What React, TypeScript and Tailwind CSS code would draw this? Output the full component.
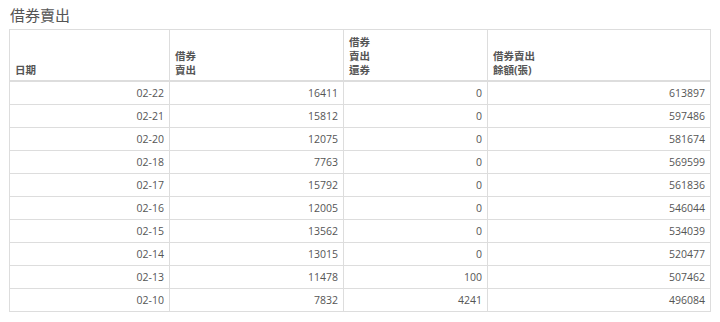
export default function App() {
  const rows = [
    { date: "02-22", sell: 16411, ret: 0, bal: 613897 },
    { date: "02-21", sell: 15812, ret: 0, bal: 597486 },
    { date: "02-20", sell: 12075, ret: 0, bal: 581674 },
    { date: "02-18", sell: 7763, ret: 0, bal: 569599 },
    { date: "02-17", sell: 15792, ret: 0, bal: 561836 },
    { date: "02-16", sell: 12005, ret: 0, bal: 546044 },
    { date: "02-15", sell: 13562, ret: 0, bal: 534039 },
    { date: "02-14", sell: 13015, ret: 0, bal: 520477 },
    { date: "02-13", sell: 11478, ret: 100, bal: 507462 },
    { date: "02-10", sell: 7832, ret: 4241, bal: 496084 },
  ];

  const th =
    "border border-[#ddd] border-b-2 px-[5px] pt-[5px] pb-[3px] text-left align-bottom font-bold leading-[14px]";
  const td = "border border-[#ddd] px-[5px] py-[4px] text-right leading-[14px]";

  return (
    <div
      className="bg-white px-[9px] pt-[4px] text-[#555]"
      style={{ fontFamily: '"Open Sans", "Noto Sans CJK TC", sans-serif' }}
    >
      {/* Heading */}
      <h1 className="ml-[1px] text-[15px] leading-[22px] font-normal text-[#555]">
        借券賣出
      </h1>

      {/* Table */}
      <table className="mt-[3px] w-[702px] border-collapse border border-[#ddd] text-[10.5px]">
        <thead>
          <tr>
            <th className={`${th} w-[160px]`}>日期</th>
            <th className={`${th} w-[174px]`}>
              借券
              <br />
              賣出
            </th>
            <th className={`${th} w-[144px]`}>
              借券
              <br />
              賣出
              <br />
              還券
            </th>
            <th className={th}>
              借券賣出
              <br />
              餘額(張)
            </th>
          </tr>
        </thead>
        <tbody>
          {rows.map((r) => (
            <tr key={r.date}>
              <td className={td}>{r.date}</td>
              <td className={td}>{r.sell}</td>
              <td className={td}>{r.ret}</td>
              <td className={td}>{r.bal}</td>
            </tr>
          ))}
        </tbody>
      </table>
    </div>
  );
}
